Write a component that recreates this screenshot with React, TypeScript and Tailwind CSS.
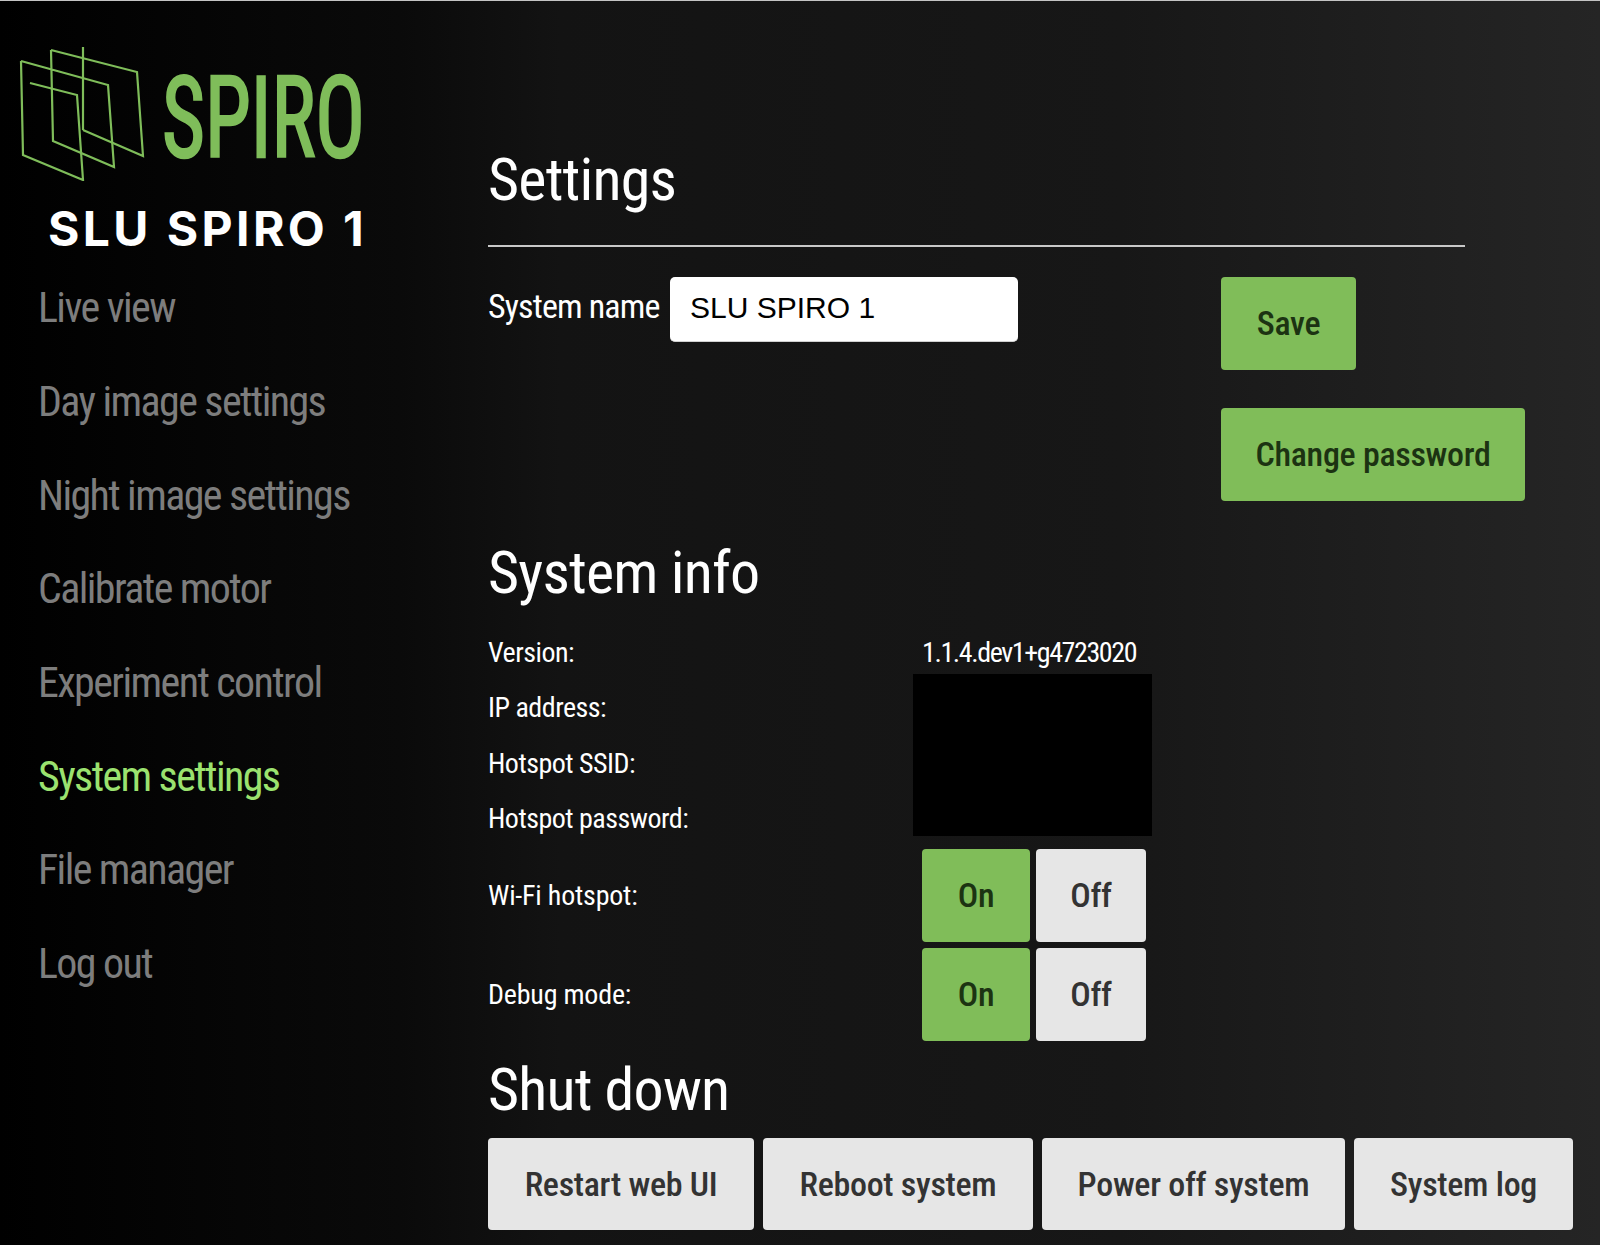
const narrow = "font-['Roboto_Condensed','Liberation_Sans_Narrow',Roboto,sans-serif]";

const navItems = ["Live view", "Day image settings", "Night image settings", "Calibrate motor", "Experiment control", "System settings", "File manager", "Log out"];

function Logo() {
  return (
    <svg width="488" height="140" viewBox="0 0 488 140" className="block" fill="none" stroke="#7fbd5a" strokeWidth="2.2">
      <path d="M51 9 L137 31 L143 115 L83 89" />
      <path d="M83 6 V89" />
      <path d="M21 20 L108 44 L114 126 L53 100 L51 9" />
      <path d="M21 20 L23 114 L83 139 L77 54 L30 42" />
      <text x="162" y="116" fill="#7fbd5a" stroke="#7fbd5a" strokeWidth="2.5" fontFamily="Roboto Condensed, Liberation Sans Narrow, Roboto, sans-serif" fontSize="114" textLength="203" lengthAdjust="spacingAndGlyphs">SPIRO</text>
    </svg>
  );
}

function Btn({ children, green, className }: { children: string; green?: boolean; className: string }) {
  return (
    <button className={`flex items-center justify-center rounded-[4px] text-[34px] font-medium tracking-[-0.3px] ${green ? "bg-[#80bd59] text-[#1c3312]" : "bg-[#e6e6e6] text-[#333333]"} ${className}`}>
      {children}
    </button>
  );
}

function Row({ label, value }: { label: string; value?: string }) {
  return (
    <div className="flex h-[55.5px] items-center text-[28px] tracking-[-0.5px] text-white">
      <span className="w-[434px]">{label}</span>
      {value && <span className="tracking-[-1.4px]">{value}</span>}
    </div>
  );
}

function Toggle({ label }: { label: string }) {
  return (
    <div className="flex h-[93px] items-center text-[28px] text-white">
      <span className="w-[434px] tracking-[-0.2px]">{label}</span>
      <div className="flex gap-[6px]">
        <Btn green className="h-[93px] w-[108px]">On</Btn>
        <Btn className="h-[93px] w-[110px]">Off</Btn>
      </div>
    </div>
  );
}

export default function App() {
  return (
    <div className={`flex h-[1245px] w-[1600px] overflow-hidden border-t border-[#c4c4c4] bg-[linear-gradient(to_right,#000000_0%,#0a0a0a_25%,#131313_35%,#171717_70%,#252525_100%)] ${narrow}`}>
      <aside className="w-[488px] shrink-0 pt-[40px]">
        <Logo />
        <div className="mt-[23px] pl-[48px] font-['Inter'] text-[48px] font-bold leading-[50px] tracking-[3.4px] whitespace-nowrap text-white">SLU SPIRO 1</div>
        <nav className="mt-[7px] flex flex-col pl-[38px]">
          {navItems.map((n) => (
            <a key={n} className={`flex h-[93.7px] items-center text-[42px] tracking-[-1.6px] ${n === "System settings" ? "text-[#9be26f]" : "text-[#7d7d7d]"}`}>{n}</a>
          ))}
        </nav>
      </aside>
      <main className="min-w-0 flex-1">
        <h1 className="mt-[144px] h-[102px] w-[977px] border-b-2 border-[#c8c8c8] text-[60px] leading-[70px] tracking-[-0.8px] text-white">Settings</h1>
        <div className="mt-[30px] flex">
          <div className="flex w-[733px] items-start">
            <label className="w-[182px] pt-[9px] text-[34px] leading-[40px] tracking-[-0.85px] text-white">System name</label>
            <input readOnly value="SLU SPIRO 1" className="h-[65px] w-[348px] rounded-[5px] border-b border-[#d0d0d0] bg-white pb-[3px] pl-[20px] font-['Liberation_Sans'] text-[30px] text-black" />
          </div>
          <div className="flex flex-col items-start gap-[38px]">
            <Btn green className="h-[93px] w-[135px]">Save</Btn>
            <Btn green className="h-[93px] w-[304px]">Change password</Btn>
          </div>
        </div>
        <h2 className="mt-[37px] text-[60px] leading-[70px] tracking-[-0.8px] text-white">System info</h2>
        <div className="relative mt-[17px]">
          <Row label="Version:" value="1.1.4.dev1+g4723020" />
          <Row label="IP address:" />
          <Row label="Hotspot SSID:" />
          <Row label="Hotspot password:" />
          <div className="absolute left-[425px] top-[49px] h-[162px] w-[239px] bg-black" />
          <div className="mt-[2px] flex flex-col gap-[6px]">
            <Toggle label="Wi-Fi hotspot:" />
            <Toggle label="Debug mode:" />
          </div>
        </div>
        <h2 className="mt-[14px] text-[60px] leading-[70px] tracking-[-0.8px] text-white">Shut down</h2>
        <div className="mt-[13px] flex gap-[9px]">
          <Btn className="h-[92px] w-[266px]">Restart web UI</Btn>
          <Btn className="h-[92px] w-[270px]">Reboot system</Btn>
          <Btn className="h-[92px] w-[303px]">Power off system</Btn>
          <Btn className="h-[92px] w-[219px]">System log</Btn>
        </div>
      </main>
    </div>
  );
}
